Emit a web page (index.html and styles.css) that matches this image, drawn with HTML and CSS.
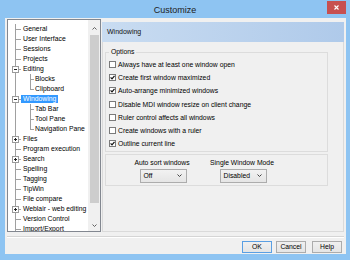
FILE: index.html
```html
<!DOCTYPE html>
<html>
<head>
<meta charset="utf-8">
<link rel="stylesheet" href="styles.css">
</head>
<body>
<div class="window">
  <div class="titlebar">
    <span></span>
    <span class="title">Customize</span>
    <span class="close"><svg width="5" height="5" viewBox="0 0 5 5"><path d="M0.5 0.5L4.5 4.5M4.5 0.5L0.5 4.5" stroke="#fff" stroke-width="1.1"/></svg></span>
  </div>
  <div class="client">
    <div class="main">
      <div class="tree">
        <div class="items">
          <div class="row l1"><span class="lbl">General</span></div>
          <div class="row l1"><span class="lbl">User Interface</span></div>
          <div class="row l1"><span class="lbl">Sessions</span></div>
          <div class="row l1"><span class="lbl">Projects</span></div>
          <div class="row l1 exp"><span class="xbox minus"></span><span class="lbl">Editing</span></div>
          <div class="row l2"><span class="lbl">Blocks</span></div>
          <div class="row l2 last"><span class="lbl">Clipboard</span></div>
          <div class="row l1 exp sel"><span class="xbox minus"></span><span class="lbl">Windowing</span></div>
          <div class="row l2"><span class="lbl">Tab Bar</span></div>
          <div class="row l2"><span class="lbl">Tool Pane</span></div>
          <div class="row l2 last"><span class="lbl">Navigation Pane</span></div>
          <div class="row l1 exp"><span class="xbox plus"></span><span class="lbl">Files</span></div>
          <div class="row l1"><span class="lbl">Program execution</span></div>
          <div class="row l1 exp"><span class="xbox plus"></span><span class="lbl">Search</span></div>
          <div class="row l1"><span class="lbl">Spelling</span></div>
          <div class="row l1"><span class="lbl">Tagging</span></div>
          <div class="row l1"><span class="lbl">TipWin</span></div>
          <div class="row l1"><span class="lbl">File compare</span></div>
          <div class="row l1 exp"><span class="xbox plus"></span><span class="lbl">Weblair - web editing</span></div>
          <div class="row l1"><span class="lbl">Version Control</span></div>
          <div class="row l1"><span class="lbl">Import/Export</span></div>
        </div>
        <div class="vscroll">
          <div class="sb-up"><svg width="5" height="3" viewBox="0 0 5 3"><path d="M0.5 2.5L2.5 0.5L4.5 2.5" fill="none" stroke="#606060"/></svg></div>
          <div class="sb-track"><div class="sb-thumb"></div></div>
          <div class="sb-down"><svg width="5" height="3" viewBox="0 0 5 3"><path d="M0.5 0.5L2.5 2.5L4.5 0.5" fill="none" stroke="#606060"/></svg></div>
        </div>
      </div>
      <div class="panel">
        <div class="panel-head">Windowing</div>
        <div class="panel-body">
          <fieldset class="group">
            <legend>Options</legend>
            <div class="chk"><span class="box"></span>Always have at least one window open</div>
            <div class="chk"><span class="box"><svg width="5" height="5" viewBox="0 0 5 5"><path d="M0.6 2.4L2 3.9L4.5 0.8" fill="none" stroke="#111" stroke-width="1.2"/></svg></span>Create first window maximized</div>
            <div class="chk"><span class="box"><svg width="5" height="5" viewBox="0 0 5 5"><path d="M0.6 2.4L2 3.9L4.5 0.8" fill="none" stroke="#111" stroke-width="1.2"/></svg></span>Auto-arrange minimized windows</div>
            <div class="chk"><span class="box"></span>Disable MDI window resize on client change</div>
            <div class="chk"><span class="box"></span>Ruler control affects all windows</div>
            <div class="chk"><span class="box"></span>Create windows with a ruler</div>
            <div class="chk"><span class="box"><svg width="5" height="5" viewBox="0 0 5 5"><path d="M0.6 2.4L2 3.9L4.5 0.8" fill="none" stroke="#111" stroke-width="1.2"/></svg></span>Outline current line</div>
          </fieldset>
          <div class="group2">
            <div class="col">
              <span class="cap">Auto sort windows</span>
              <span class="combo"><span>Off</span><svg width="5" height="3" viewBox="0 0 5 3"><path d="M0.5 0.5L2.5 2.5L4.5 0.5" fill="none" stroke="#444"/></svg></span>
            </div>
            <div class="col">
              <span class="cap">Single Window Mode</span>
              <span class="combo"><span>Disabled</span><svg width="5" height="3" viewBox="0 0 5 3"><path d="M0.5 0.5L2.5 2.5L4.5 0.5" fill="none" stroke="#444"/></svg></span>
            </div>
          </div>
        </div>
      </div>
    </div>
    <div class="sep"></div>
    <div class="buttons">
      <button class="btn default">OK</button>
      <button class="btn cancel">Cancel</button>
      <button class="btn help">Help</button>
    </div>
  </div>
</div>
</body>
</html>
```
FILE: styles.css
```css
* { box-sizing: border-box; }
html, body { margin: 0; padding: 0; }
body {
  width: 350px;
  height: 260px;
  overflow: hidden;
  font-family: "Liberation Sans", Arial, sans-serif;
  font-size: 6.8px;
  color: #000;
}
.window {
  width: 350px;
  height: 260px;
  background: #8ec4f2;
  display: flex;
  flex-direction: column;
}
.titlebar {
  height: 18px;
  display: grid;
  grid-template-columns: 1fr auto 1fr;
  align-items: start;
}
.title {
  font-size: 9px;
  line-height: 10px;
  margin-top: 5px;
  color: #222;
}
.close {
  justify-self: end;
  width: 19px;
  height: 13px;
  margin-top: 1px;
  margin-right: 4px;
  background: #c75050;
  display: flex;
  align-items: center;
  justify-content: center;
}
.client {
  flex: 1;
  margin: 0 4px 6px 5px;
  background: #f0f0f0;
  padding: 1px 2px 1px 2px;
  display: flex;
  flex-direction: column;
}
.main {
  display: flex;
  height: 213px;
  gap: 1px;
}
.tree {
  width: 94px;
  border: 1px solid #828790;
  background: #fff;
  display: flex;
}
.items {
  flex: 1;
  overflow: hidden;
  padding-top: 4px;
}
.row {
  height: 10px;
  display: flex;
  align-items: center;
  white-space: nowrap;
}
.l1 {
  padding-left: 13px;
  background:
    linear-gradient(#a0a0a0, #a0a0a0) 7px 0 / 1px 100% no-repeat,
    linear-gradient(#a0a0a0, #a0a0a0) 7px 5px / 6px 1px no-repeat;
}
.l1.exp { padding-left: 4px; }
.l2 {
  padding-left: 25px;
  background:
    linear-gradient(#a0a0a0, #a0a0a0) 7px 0 / 1px 100% no-repeat,
    linear-gradient(#a0a0a0, #a0a0a0) 22px 0 / 1px 100% no-repeat,
    linear-gradient(#a0a0a0, #a0a0a0) 22px 5px / 4px 1px no-repeat;
}
.l2.last {
  background:
    linear-gradient(#a0a0a0, #a0a0a0) 7px 0 / 1px 100% no-repeat,
    linear-gradient(#a0a0a0, #a0a0a0) 22px 0 / 1px 6px no-repeat,
    linear-gradient(#a0a0a0, #a0a0a0) 22px 5px / 4px 1px no-repeat;
}
.xbox {
  width: 7px;
  height: 7px;
  border: 1px solid #9a9a9a;
  margin-right: 2px;
  margin-top: 1px;
  flex: none;
}
.xbox.minus {
  background: linear-gradient(#222, #222) center / 3px 1px no-repeat, #fff;
}
.xbox.plus {
  background:
    linear-gradient(#222, #222) center / 3px 1px no-repeat,
    linear-gradient(#222, #222) center / 1px 3px no-repeat,
    #fff;
}
.lbl {
  padding: 0 2px;
  height: 8px;
  line-height: 8px;
}
.sel .lbl {
  background: #3399ff;
  color: #fff;
}
.vscroll {
  width: 12px;
  display: flex;
  flex-direction: column;
  background: #f0f0f0;
}
.sb-up {
  height: 15px;
  display: flex;
  justify-content: center;
  align-items: flex-start;
  padding-top: 7px;
}
.sb-up svg, .sb-down svg { display: block; }
.sb-track { flex: 1; }
.sb-thumb {
  margin: 0 1px 0 2px;
  height: 168px;
  background: #cdcdcd;
}
.sb-down {
  height: 13px;
  display: flex;
  justify-content: center;
  align-items: flex-start;
  padding-top: 6px;
}
.panel {
  flex: 1;
  margin-top: 3px;
  display: flex;
  flex-direction: column;
}
.panel-head {
  height: 20px;
  line-height: 20px;
  padding-left: 5px;
  font-size: 7px;
  color: #111;
  background: linear-gradient(to right, #c9dcf1, #afcaea);
}
.panel-body {
  flex: 1;
  border: 1px solid #dadada;
  border-top: none;
  padding-left: 2px;
}
.group {
  margin: 6px 0 0 0;
  width: 223px;
  min-width: 0;
  padding: 2px 0 1px 3px;
  border: 1px solid #dcdcdc;
}
.group legend {
  padding: 0 2px;
  margin-left: 0;
  line-height: 8px;
  font-size: 6.8px;
}
.chk {
  height: 13.2px;
  display: flex;
  align-items: center;
  gap: 2px;
  white-space: nowrap;
}
.box {
  width: 7px;
  height: 7px;
  border: 1px solid #7a7a7a;
  background: #fff;
  flex: none;
  display: flex;
  align-items: center;
  justify-content: center;
}
.box svg { display: block; }
.group2 {
  margin-top: 2px;
  width: 223px;
  height: 32px;
  border: 1px solid #dcdcdc;
  display: grid;
  grid-template-columns: 80px 80px;
  padding: 4px 0 0 16px;
}
.col {
  display: flex;
  flex-direction: column;
  align-items: center;
}
.cap {
  line-height: 8px;
  white-space: nowrap;
}
.combo {
  margin-top: 1.5px;
  margin-left: 2px;
  width: 47px;
  height: 14px;
  border: 1px solid #acacac;
  background: linear-gradient(#f2f2f2, #e5e5e5);
  display: flex;
  align-items: center;
  justify-content: space-between;
  padding: 0 4px 0 3px;
}
.combo svg { display: block; }
.sep {
  margin-top: 4px;
  height: 2px;
  border-top: 1px solid #d5d5d5;
  border-bottom: 1px solid #fff;
}
.buttons {
  margin-top: 3px;
  height: 12px;
  display: flex;
  justify-content: flex-end;
  padding-right: 2px;
}
.btn {
  width: 30px;
  height: 12px;
  padding: 0;
  border: 1px solid #acacac;
  background: linear-gradient(#f0f0f0, #e5e5e5);
  font-family: "Liberation Sans", Arial, sans-serif;
  font-size: 6.8px;
  line-height: 10px;
  color: #000;
  text-align: center;
}
.btn.default { border-color: #5a9fe3; }
.btn.cancel { margin-left: 4px; }
.btn.help { margin-left: 6px; }
```
